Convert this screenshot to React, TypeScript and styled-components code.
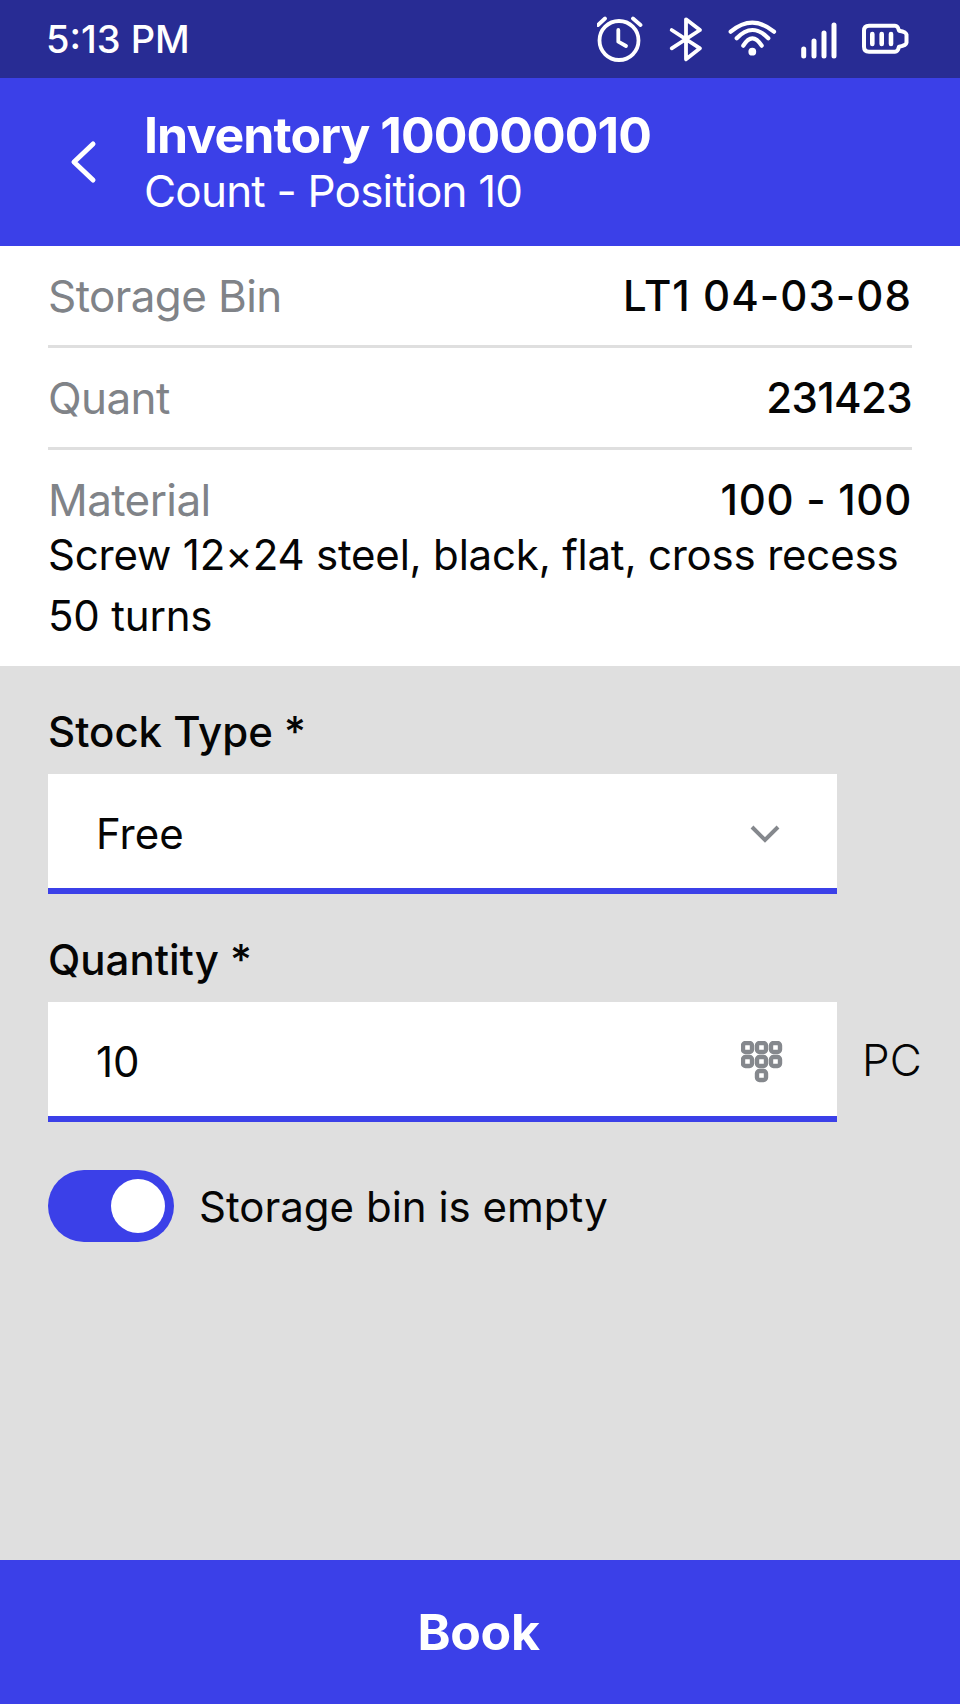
import React from 'react';
import styled, { createGlobalStyle } from 'styled-components';

const GlobalStyle = createGlobalStyle`
  html, body {
    margin: 0;
    padding: 0;
    background: #dfdfdf;
  }
  * {
    box-sizing: border-box;
  }
`;

const Screen = styled.div`
  width: 960px;
  height: 1704px;
  display: flex;
  flex-direction: column;
  background: #dfdfdf;
  color: #050505;
  font-family: Inter, "Liberation Sans", sans-serif;
`;

const StatusBar = styled.div`
  height: 78px;
  flex: none;
  display: flex;
  align-items: center;
  justify-content: space-between;
  padding: 0 51px 0 46px;
  background: #282c94;
  color: #fff;
  font-size: 38px;
  font-weight: 500;
`;

const Header = styled.div`
  height: 168px;
  flex: none;
  display: flex;
  align-items: center;
  padding: 4px 0 0 68px;
  background: #3b40e8;
  color: #fff;
`;

const BackIcon = styled.svg`
  width: 32px;
  height: 48px;
  margin: -4px 44px 0 0;
  fill: none;
  stroke: #fff;
  stroke-width: 5;
  stroke-linecap: round;
  stroke-linejoin: round;
`;

const HeaderText = styled.div`
  display: flex;
  flex-direction: column;
`;

const HeaderTitle = styled.div`
  font-size: 50px;
  line-height: 55px;
  font-weight: 700;
  letter-spacing: -0.95px;
`;

const HeaderSub = styled.div`
  font-size: 44px;
  line-height: 57px;
  letter-spacing: -0.8px;
`;

const InfoPanel = styled.div`
  height: 420px;
  flex: none;
  padding: 0 48px;
  background: #fff;
`;

const InfoRow = styled.div`
  height: 102px;
  display: flex;
  align-items: center;
  justify-content: space-between;
  border-bottom: 3px solid #dfdfdf;
`;

const MaterialRow = styled.div`
  display: flex;
  justify-content: space-between;
  padding-top: 24px;
  height: 74px;
`;

const InfoLabel = styled.span`
  font-size: 44px;
  line-height: 52px;
  color: #808388;
  letter-spacing: -0.6px;
`;

const InfoValue = styled.span<{ $spacing: number }>`
  font-size: 42px;
  line-height: 52px;
  font-weight: 500;
  letter-spacing: ${p => p.$spacing}px;
`;

const MaterialText = styled.div`
  font-size: 42px;
  line-height: 61px;
  letter-spacing: -0.2px;
`;

const Form = styled.div`
  flex: 1;
  padding: 0 0 0 48px;
`;

const FieldLabel = styled.div`
  margin-top: 40px;
  font-size: 42px;
  line-height: 52px;
  font-weight: 500;
`;

const FieldRow = styled.div`
  display: flex;
  align-items: center;
  margin-top: 16px;
`;

const Field = styled.div`
  width: 789px;
  height: 120px;
  display: flex;
  align-items: center;
  justify-content: space-between;
  padding: 5px 54px 0 48px;
  background: #fff;
  border-bottom: 6px solid #3b40e8;
  font-size: 42px;
`;

const Unit = styled.span`
  margin: 0 0 4px 25px;
  font-size: 44px;
  font-weight: 300;
`;

const Chevron = styled.svg`
  display: block;
  margin-right: 2px;
  fill: none;
  stroke: #85888d;
  stroke-width: 4;
`;

const KeypadIcon = styled.svg`
  display: block;
  fill: none;
  stroke: #85888d;
  stroke-width: 4.4;
`;

const ToggleRow = styled.div`
  display: flex;
  align-items: center;
  gap: 25px;
  margin-top: 48px;
  font-size: 42px;
`;

const Toggle = styled.div`
  width: 126px;
  height: 72px;
  flex: none;
  display: flex;
  align-items: center;
  justify-content: flex-end;
  padding-right: 9px;
  border-radius: 36px;
  background: #3b40e8;
`;

const Knob = styled.div`
  width: 54px;
  height: 54px;
  border-radius: 50%;
  background: #fff;
`;

const BookButton = styled.button`
  height: 144px;
  flex: none;
  border: none;
  padding: 0 3px 0 0;
  background: #3b40e8;
  color: #fff;
  font-family: inherit;
  font-size: 50px;
  font-weight: 700;
  letter-spacing: -0.3px;
`;

const StatusIcons = () => (
  <svg width="312" height="50" viewBox="0 0 312 50" fill="none" stroke="#fff" strokeWidth="3.8" strokeLinecap="round" strokeLinejoin="round">
    {/* alarm */}
    <circle cx="22" cy="26.5" r="19.5" />
    <path d="M21.3 16v11.7L29 32" />
    <path d="M1 11l7-6.5M36 4.5L43.5 11" />
    {/* bluetooth */}
    <path d="M74.7 16L103 34.3 89 45.3V5.3L103 16 74.7 34.3" />
    {/* wifi */}
    <path d="M133.7 17.7Q155.3 -.3 177 17.7M139.7 24.3Q155.3 7.7 171.3 24.3M146.3 31.7Q155.3 16.9 164.7 31.7" strokeWidth="4.2" />
    <circle cx="155.3" cy="37.7" r="2" fill="#fff" />
    {/* signal */}
    <path d="M206.7 35v7M217 27v15M227 19v23M237 11v31" strokeWidth="5" />
    {/* battery */}
    <path d="M272 11.7H298q3 0 4 5q7 1 7.5 4v8q-.5 3-7.5 4q-1 5-4 5H272q-5 0-5-5V16.7q0-5 5-5z" strokeWidth="4" />
    <path d="M275.3 20v10M284.7 20v10M294 20v10" strokeWidth="4.6" />
  </svg>
);

const Keypad = () => (
  <KeypadIcon width="42" height="42" viewBox="0 0 42 42">
    {[[0, 0], [14, 0], [28, 0], [0, 14], [14, 14], [28, 14], [14, 28]].map(([x, y]) => (
      <rect key={`${x}-${y}`} x={x + 2} y={y + 2} width="9" height="9" rx="2.5" />
    ))}
  </KeypadIcon>
);

const App = () => (
  <Screen>
    <GlobalStyle />
    <StatusBar>
      <span>5:13 PM</span>
      <StatusIcons />
    </StatusBar>
    <Header>
      <BackIcon viewBox="0 0 32 48">
        <path d="M25 6L6 24l19 18" />
      </BackIcon>
      <HeaderText>
        <HeaderTitle>Inventory 100000010</HeaderTitle>
        <HeaderSub>Count - Position 10</HeaderSub>
      </HeaderText>
    </Header>
    <InfoPanel>
      <InfoRow>
        <InfoLabel>Storage Bin</InfoLabel>
        <InfoValue $spacing={1.05}>LT1 04-03-08</InfoValue>
      </InfoRow>
      <InfoRow>
        <InfoLabel>Quant</InfoLabel>
        <InfoValue $spacing={-0.6}>231423</InfoValue>
      </InfoRow>
      <MaterialRow>
        <InfoLabel>Material</InfoLabel>
        <InfoValue $spacing={0.7}>100 - 100</InfoValue>
      </MaterialRow>
      <MaterialText>
        Screw 12×24 steel, black, flat, cross recess
        <br />
        50 turns
      </MaterialText>
    </InfoPanel>
    <Form>
      <FieldLabel>Stock Type *</FieldLabel>
      <FieldRow>
        <Field>
          <span>Free</span>
          <Chevron width="32" height="20" viewBox="0 0 32 20">
            <path d="M3 3l13 13L29 3" />
          </Chevron>
        </Field>
      </FieldRow>
      <FieldLabel>Quantity *</FieldLabel>
      <FieldRow>
        <Field>
          <span>10</span>
          <Keypad />
        </Field>
        <Unit>PC</Unit>
      </FieldRow>
      <ToggleRow>
        <Toggle>
          <Knob />
        </Toggle>
        <span>Storage bin is empty</span>
      </ToggleRow>
    </Form>
    <BookButton>Book</BookButton>
  </Screen>
);

export default App;
